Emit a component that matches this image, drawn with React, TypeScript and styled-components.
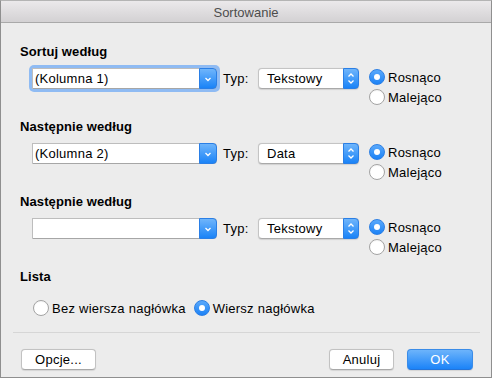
import React from 'react';
import styled, { createGlobalStyle } from 'styled-components';

const GlobalStyle = createGlobalStyle`
  html, body {
    margin: 0;
    padding: 0;
    background: #ececec;
  }
  * {
    box-sizing: border-box;
  }
`;

const Window = styled.div`
  width: 492px;
  height: 378px;
  border: 1px solid #8f8f8f;
  border-top-color: #b4b4b4;
  background: #ececec;
  font-family: 'Liberation Sans', Arial, sans-serif;
  font-size: 13px;
  letter-spacing: 0.25px;
  color: #000;
  display: flex;
  flex-direction: column;
`;

const TitleBar = styled.div`
  height: 22px;
  flex-shrink: 0;
  border-bottom: 1px solid #a9a9a9;
  background: linear-gradient(#ebe9eb, #d3d1d3);
  display: flex;
  align-items: center;
  justify-content: center;
  color: #4d4d4d;
  font-size: 13px;
  letter-spacing: 0;
  padding-top: 1px;
`;

const Body = styled.div`
  flex: 1;
  display: flex;
  flex-direction: column;
  padding: 21px 18px 0 19px;
`;

const Section = styled.div`
  display: flex;
  flex-direction: column;
  margin-bottom: 11px;
`;

const Heading = styled.div`
  font-weight: bold;
  letter-spacing: 0.1px;
  line-height: 16px;
  height: 16px;
  margin-bottom: 8px;
`;

const Row = styled.div`
  display: flex;
  align-items: flex-start;
  padding-left: 12px;
  height: 40px;
`;

const ComboWrap = styled.div<{ $focused?: boolean }>`
  margin: -3px;
  padding: 3px;
  border-radius: 5px;
  background: ${p => (p.$focused ? '#8fbbf3' : 'transparent')};
`;

const Combo = styled.div`
  width: 185px;
  height: 21px;
  display: flex;
  background: #fff;
  border: 1px solid #bdbdbd;
  border-bottom-color: #a6a6a6;
  border-radius: 0 4px 4px 0;
`;

const ComboText = styled.div`
  flex: 1;
  padding-left: 2px;
  line-height: 19px;
  white-space: nowrap;
  overflow: hidden;
`;

const BlueCap = styled.div<{ $width: number }>`
  width: ${p => p.$width}px;
  margin: -1px -1px -1px 0;
  border-radius: 0 4px 4px 0;
  background: linear-gradient(#6fb5fb, #1a83f7);
  border: 1px solid #2a7fe6;
  display: flex;
  align-items: center;
  justify-content: center;
`;

const TypLabel = styled.div`
  width: 41px;
  padding-left: 6px;
  line-height: 21px;
`;

const Popup = styled.div`
  width: 101px;
  height: 21px;
  display: flex;
  background: #fff;
  border: 1px solid #c4c4c4;
  border-bottom-color: #a9a9a9;
  border-radius: 4px;
  box-shadow: 0 0.5px 1px rgba(0, 0, 0, 0.12);
`;

const PopupText = styled.div`
  flex: 1;
  padding-left: 8px;
  line-height: 19px;
`;

const RadioGroup = styled.div`
  display: flex;
  flex-direction: column;
  margin-left: 10px;
  margin-top: -1px;
`;

const RadioItem = styled.label`
  display: flex;
  align-items: center;
  height: 20px;
  gap: 3px;
  white-space: nowrap;
`;

const Circle = styled.span<{ $checked: boolean }>`
  width: 16px;
  height: 16px;
  border-radius: 50%;
  flex-shrink: 0;
  display: flex;
  align-items: center;
  justify-content: center;
  background: ${p => (p.$checked ? 'linear-gradient(#5aa9fb, #1c82f6)' : '#fff')};
  border: 1px solid ${p => (p.$checked ? '#2c7fe4' : '#a3a3a3')};
  box-shadow: ${p => (p.$checked ? 'none' : 'inset 0 1px 1px rgba(0,0,0,0.05)')};
`;

const Dot = styled.span`
  width: 6px;
  height: 6px;
  border-radius: 50%;
  background: #fff;
`;

const ListRow = styled.div`
  display: flex;
  align-items: center;
  gap: 8px;
  padding-left: 13px;
  margin-top: 5px;
`;

const Separator = styled.div`
  height: 1px;
  background: #d6d6d6;
  margin: 14px -7px 0 -7px;
`;

const Footer = styled.div`
  display: flex;
  align-items: center;
  margin-top: 16px;
  padding-left: 1px;
`;

const Spacer = styled.div`
  flex: 1;
`;

const Button = styled.button<{ $width: number; $primary?: boolean }>`
  width: ${p => p.$width}px;
  height: 21px;
  padding: 0;
  font-family: inherit;
  font-size: 13px;
  letter-spacing: 0.25px;
  border-radius: 4px;
  color: ${p => (p.$primary ? '#fff' : '#000')};
  background: ${p => (p.$primary ? 'linear-gradient(#6db4fb, #1b83f8)' : '#fff')};
  border: 1px solid ${p => (p.$primary ? '#3a8ce8' : '#c2c2c2')};
  border-bottom-color: ${p => (p.$primary ? '#2474d9' : '#a8a8a8')};
  box-shadow: 0 0.5px 1px rgba(0, 0, 0, 0.1);
`;

const ChevronDown = () => (
  <svg width="8" height="6" viewBox="0 0 8 6">
    <path d="M1.5 2 L4 4.5 L6.5 2" fill="none" stroke="#fff" strokeWidth="1.3" />
  </svg>
);

const Updown = () => (
  <svg width="8" height="13" viewBox="0 0 8 13">
    <path d="M1.5 4.5 L4 2 L6.5 4.5 M1.5 8.5 L4 11 L6.5 8.5" fill="none" stroke="#fff" strokeWidth="1.3" />
  </svg>
);

interface RadioProps {
  checked: boolean;
  label: string;
}

const Radio: React.FC<RadioProps> = ({ checked, label }) => (
  <RadioItem>
    <Circle $checked={checked}>{checked && <Dot />}</Circle>
    {label}
  </RadioItem>
);

interface SortRowProps {
  title: string;
  column: string;
  type: string;
  focused?: boolean;
}

const SortSection: React.FC<SortRowProps> = ({ title, column, type, focused }) => (
  <Section>
    <Heading>{title}</Heading>
    <Row>
      <ComboWrap $focused={focused}>
        <Combo>
          <ComboText>{column}</ComboText>
          <BlueCap $width={18}>
            <ChevronDown />
          </BlueCap>
        </Combo>
      </ComboWrap>
      <TypLabel>Typ:</TypLabel>
      <Popup>
        <PopupText>{type}</PopupText>
        <BlueCap $width={16}>
          <Updown />
        </BlueCap>
      </Popup>
      <RadioGroup>
        <Radio checked label="Rosnąco" />
        <Radio checked={false} label="Malejąco" />
      </RadioGroup>
    </Row>
  </Section>
);

export default function App() {
  return (
    <>
      <GlobalStyle />
      <Window>
        <TitleBar>Sortowanie</TitleBar>
        <Body>
          <SortSection title="Sortuj według" column="(Kolumna 1)" type="Tekstowy" focused />
          <SortSection title="Następnie według" column="(Kolumna 2)" type="Data" />
          <SortSection title="Następnie według" column="" type="Tekstowy" />
          <Heading>Lista</Heading>
          <ListRow>
            <Radio checked={false} label="Bez wiersza nagłówka" />
            <Radio checked label="Wiersz nagłówka" />
          </ListRow>
          <Separator />
          <Footer>
            <Button $width={75}>Opcje...</Button>
            <Spacer />
            <Button $width={65}>Anuluj</Button>
            <Button $width={66} $primary style={{ marginLeft: 13 }}>
              OK
            </Button>
          </Footer>
        </Body>
      </Window>
    </>
  );
}
